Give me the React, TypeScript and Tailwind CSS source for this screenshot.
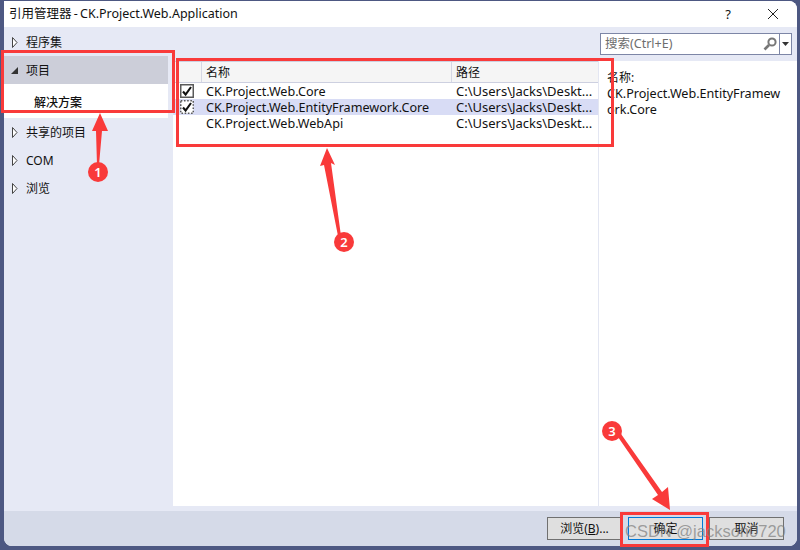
import React from "react";

const font = { fontFamily: '"Noto Sans", "Noto Sans CJK SC", sans-serif' };

function Tri({ open }: { open?: boolean }) {
  return (
    <svg width="8" height="11" viewBox="0 0 8 11" className="shrink-0">
      {open ? (
        <path d="M7 2V9H0Z" fill="#333" />
      ) : (
        <path d="M1.5 0.5L6 5.5L1.5 10.5Z" fill="#fff" stroke="#444" strokeWidth="1" />
      )}
    </svg>
  );
}

function SideRow({ label, open, active }: { label: string; open?: boolean; active?: boolean }) {
  return (
    <div className={`flex items-center h-[28px] pl-[7px] gap-[7px] ${active ? "bg-[#ccced9]" : ""}`}>
      <Tri open={open} />
      <span className="pt-[2px]">{label}</span>
    </div>
  );
}

function Check({ focus }: { focus?: boolean }) {
  return (
    <svg width="14" height="14" viewBox="0 0 14 14" className="block">
      <rect x="0.75" y="0.75" width="12.5" height="12.5" fill="#fff" stroke="#5a5a5a" strokeWidth="1.5" strokeDasharray={focus ? "1.6 1.6" : undefined} />
      <path d="M3 7.5L5.6 10.5L11 3" fill="none" stroke="#111" strokeWidth="2.1" />
    </svg>
  );
}

function Row({ name, check, focus, sel }: { name: string; check?: boolean; focus?: boolean; sel?: boolean }) {
  return (
    <div className={`flex items-center h-[16px] ${sel ? "bg-[#d8dcf5]" : ""}`}>
      <div className="w-[29px] pl-[7px] shrink-0">{check && <Check focus={focus} />}</div>
      <div className="w-[250px] pl-[4px] pt-[2px] shrink-0 whitespace-nowrap text-[12.6px]">{name}</div>
      <div className="pl-[4px] whitespace-nowrap text-[13px]">C:\Users\Jacks\Deskt...</div>
    </div>
  );
}

function Btn({ children, primary }: { children: React.ReactNode; primary?: boolean }) {
  return (
    <div className={`w-[75px] h-[23px] flex items-center justify-center border ${primary ? "border-[#0078d7] bg-[#e1e1e1]" : "border-[#707070] bg-[#dfdfdf]"}`}>
      {children}
    </div>
  );
}

function Badge({ n, x, y }: { n: string; x: string; y: string }) {
  return (
    <div className={`absolute ${x} ${y} w-[20px] h-[20px] rounded-full bg-[#f93a3a] text-white flex items-center justify-center text-[13px] font-semibold`}>
      {n}
    </div>
  );
}

export default function App() {
  return (
    <div style={font} className="relative w-[800px] h-[550px] overflow-hidden bg-[#4d5882] pl-[4px] pr-[3px] pt-[1px] pb-[4px] text-[12px] leading-[16px] text-[#111]">
      <div className="h-full flex flex-col rounded-tr-[8px] rounded-bl-[8px] rounded-br-[8px] overflow-hidden bg-white">
        <div className="h-[26px] flex items-center bg-white pl-[5px] text-[12.5px] shrink-0">
          <span className="flex-1 [word-spacing:-1px]">引用管理器 - CK.Project.Web.Application</span>
          <span className="w-[14px] text-center text-[13px] mr-[32px]">?</span>
          <svg width="12" height="12" viewBox="0 0 12 12" className="mr-[18px]">
            <path d="M1 1L11 11M11 1L1 11" stroke="#222" strokeWidth="1" />
          </svg>
        </div>
        <div className="flex-1 flex min-h-0">
          <div className="w-[169px] bg-[#e6e9f5] shrink-0 pr-[5px] pt-[1px]">
            <SideRow label="程序集" />
            <SideRow label="项目" open active />
            <div className="h-[34px] bg-white pl-[30px] pt-[11px] font-medium">解决方案</div>
            <SideRow label="共享的项目" />
            <SideRow label="COM" />
            <SideRow label="浏览" />
          </div>
          <div className="flex-1 flex flex-col min-w-0">
            <div className="h-[34px] flex items-center justify-end bg-[#e6e9f5] pr-[5px] shrink-0">
              <div className="w-[192px] h-[22px] flex items-center border border-[#7d86a6] bg-white">
                <span className="flex-1 pl-[4px] text-[#6d6d6d] text-[12.5px]">搜索(Ctrl+E)</span>
                <svg width="16" height="16" viewBox="0 0 16 16" className="mr-[1px]">
                  <circle cx="10" cy="6" r="3.6" fill="none" stroke="#777" strokeWidth="2" />
                  <path d="M7 9L2.5 13.5" stroke="#777" strokeWidth="2.6" />
                </svg>
                <div className="w-[12px] h-full border-l border-[#7d86a6] flex items-center justify-center">
                  <svg width="7" height="4" viewBox="0 0 7 4">
                    <path d="M0 0H7L3.5 4Z" fill="#333" />
                  </svg>
                </div>
              </div>
            </div>
            <div className="flex-1 flex min-h-0">
              <div className="w-[425px] shrink-0 bg-white">
                <div className="h-[22px] flex items-center bg-[#f5f5f5] border-t border-b border-[#cdd0e0]">
                  <div className="w-[29px] h-full border-r border-[#d5d7e4] shrink-0" />
                  <div className="w-[250px] h-full flex items-center pl-[4px] pt-[2px] border-r border-[#d5d7e4] shrink-0">名称</div>
                  <div className="pl-[4px] pt-[2px]">路径</div>
                </div>
                <Row name="CK.Project.Web.Core" check />
                <Row name="CK.Project.Web.EntityFramework.Core" check focus sel />
                <Row name="CK.Project.Web.WebApi" />
              </div>
              <div className="flex-1 bg-white border-l border-[#e3e6f2] pl-[8px] pr-[11px] pt-[9px] break-all text-[12.6px]">
                <div className="text-[12px]">名称:</div>
                <div>CK.Project.Web.EntityFramework.Core</div>
              </div>
            </div>
          </div>
        </div>
        <div className="h-[5px] bg-[#e6e9f5] shrink-0" />
        <div className="h-[35px] bg-[#d5dae8] shrink-0 flex items-center justify-end gap-[6px] pr-[13px]">
          <Btn>浏览(<u>B</u>)...</Btn>
          <Btn primary>确定</Btn>
          <Btn>取消</Btn>
        </div>
      </div>

      {/* annotations */}
      <div className="absolute left-[1px] top-[50px] w-[174px] h-[63px] border-[3px] border-[#f93a3a]" />
      <div className="absolute left-[176px] top-[58px] w-[438px] h-[89px] border-[3px] border-[#f93a3a]" />
      <div className="absolute left-[620px] top-[512px] w-[89px] h-[35px] border-[3px] border-[#f93a3a]" />
      <svg width="800" height="550" viewBox="0 0 800 550" className="absolute left-0 top-0 pointer-events-none">
        <path d="M100 113L108 131L102 131L99 165L97 165L96 131L92 131Z" fill="#f93a3a" />
        <path d="M327 148L335 165L331 163L341 236L338 236L324 165L320 166Z" fill="#f93a3a" />
        <path d="M618 437L621 434L662 492L668 487L670 510L652 499L658 495Z" fill="#f93a3a" />
      </svg>
      <Badge n="1" x="left-[88px]" y="top-[162px]" />
      <Badge n="2" x="left-[334px]" y="top-[232px]" />
      <Badge n="3" x="left-[602px]" y="top-[421px]" />
      <div className="absolute left-[625px] top-[518px] text-[16.5px] leading-[26px] whitespace-nowrap text-[#7c7c7c]/70" style={{ fontFamily: '"Liberation Sans", sans-serif' }}>
        CSDN @jackson0720
      </div>
    </div>
  );
}
